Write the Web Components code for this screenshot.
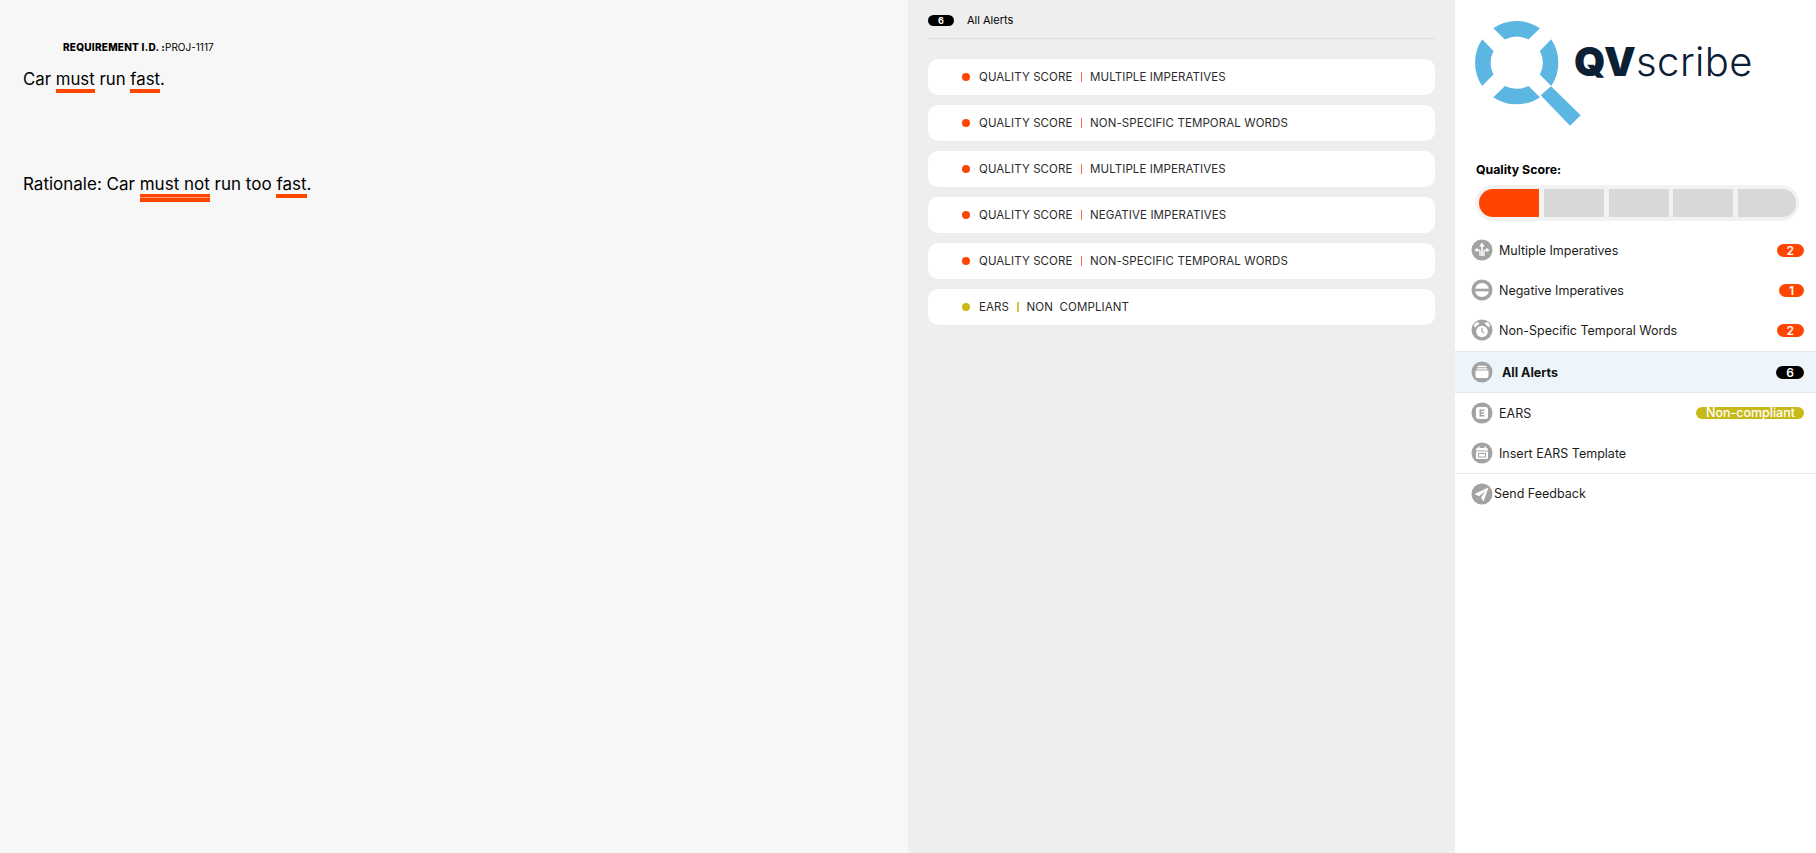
<!DOCTYPE html>
<html>
<head>
<meta charset="utf-8">
<title>QVscribe</title>
<style>
  html, body { margin: 0; height: 100%; }
  body { font-family: "Inter", "Liberation Sans", sans-serif; color: #000; overflow: hidden; }
</style>
</head>
<body>
<qv-app>
  <qv-document slot="document">
    <span slot="label">REQUIREMENT I.D. :</span>
    <span slot="id">PROJ-1117</span>
    <span slot="text">Car <qv-mark>must</qv-mark> run <qv-mark>fast</qv-mark>.</span>
    <span slot="rationale">Rationale: Car <qv-mark double>must not</qv-mark> run too <qv-mark>fast</qv-mark>.</span>
  </qv-document>
  <qv-alerts slot="alerts" count="6" title="All Alerts">
    <qv-alert kind="QUALITY SCORE" name="MULTIPLE IMPERATIVES"></qv-alert>
    <qv-alert kind="QUALITY SCORE" name="NON-SPECIFIC TEMPORAL WORDS"></qv-alert>
    <qv-alert kind="QUALITY SCORE" name="MULTIPLE IMPERATIVES"></qv-alert>
    <qv-alert kind="QUALITY SCORE" name="NEGATIVE IMPERATIVES"></qv-alert>
    <qv-alert kind="QUALITY SCORE" name="NON-SPECIFIC TEMPORAL WORDS"></qv-alert>
    <qv-alert kind="EARS" name="NON&nbsp; COMPLIANT" color="#c8b91a"></qv-alert>
  </qv-alerts>
  <qv-sidebar slot="sidebar">
    <qv-logo></qv-logo>
    <qv-score value="1"></qv-score>
    <qv-row icon="multi" badge="2">Multiple Imperatives</qv-row>
    <qv-row icon="negative" badge="1">Negative Imperatives</qv-row>
    <qv-row icon="clock" badge="2">Non-Specific Temporal Words</qv-row>
    <qv-row icon="tray" badge="6" badge-color="#000" active>All Alerts</qv-row>
    <qv-row icon="ears" badge="Non-compliant" badge-color="#c8b91a">EARS</qv-row>
    <qv-row icon="calendar">Insert EARS Template</qv-row>
    <qv-row icon="send" feedback>Send Feedback</qv-row>
  </qv-sidebar>
</qv-app>

<script>
// qv-app: the three columns
class QvApp extends HTMLElement {
  constructor() {
    super();
    this.attachShadow({ mode: 'open' }).innerHTML = `
      <style>
        :host { display: grid; grid-template-columns: 908px 547px 361px; height: 853px; }
      </style>
      <slot name="document"></slot>
      <slot name="alerts"></slot>
      <slot name="sidebar"></slot>`;
  }
}

// qv-document: the requirement text on the left
class QvDocument extends HTMLElement {
  constructor() {
    super();
    this.attachShadow({ mode: 'open' }).innerHTML = `
      <style>
        :host { display: block; background: #f7f7f7; padding: 41px 0 0 23px; }
        .req { font-size: 10px; line-height: 13px; padding-left: 40px; white-space: nowrap; }
        ::slotted([slot=label]) { font-weight: 800; letter-spacing: .25px; }
        .line { font-size: 16.800px; line-height: 24px; white-space: nowrap; }
        .text { margin-top: 13px; }
        .rationale { margin-top: 79px; font-size: 17px; }
      </style>
      <div class="req"><slot name="label"></slot><slot name="id"></slot></div>
      <div class="line text"><slot name="text"></slot></div>
      <div class="line rationale"><slot name="rationale"></slot></div>`;
  }
}

// qv-mark: an underlined hit in the text
class QvMark extends HTMLElement {
  constructor() {
    super();
    this.attachShadow({ mode: 'open' }).innerHTML = `
      <style>
        :host { display: inline-block; border-bottom: 4px solid #ff4500; line-height: 19px; height: 19px; }
        :host([double]) { border-bottom: 0; padding-bottom: 8px;
          background: linear-gradient(#ff4500 0 3.500px, #ff9a73 3.500px 4.500px, #ff4500 4.500px) bottom / 100% 8px no-repeat; }
      </style>
      <slot></slot>`;
  }
}

// qv-alerts: middle column with header and cards
class QvAlerts extends HTMLElement {
  constructor() {
    super();
    this.attachShadow({ mode: 'open' }).innerHTML = `
      <style>
        :host { display: block; background: #eeeeee; padding: 0 20px; }
        header { display: flex; align-items: center; gap: 13px; height: 38px; padding-top: 2px; box-sizing: border-box; font-size: 11px; }
        .count { width: 26px; height: 11px; border-radius: 6px; background: #000; color: #fff; font-size: 9px; font-weight: 700;
                 line-height: 11px; text-align: center; }
        hr { margin: 0 0 20px; border: 0; height: 1px; background: #dcdcdc; }
        .list { display: flex; flex-direction: column; gap: 10px; }
      </style>
      <header><span class="count"></span><span class="title"></span></header>
      <hr>
      <div class="list"><slot></slot></div>`;
  }
  connectedCallback() {
    this.shadowRoot.querySelector('.count').textContent = this.getAttribute('count');
    this.shadowRoot.querySelector('.title').textContent = this.getAttribute('title');
  }
}

// qv-alert: one white card
class QvAlert extends HTMLElement {
  constructor() {
    super();
    this.attachShadow({ mode: 'open' }).innerHTML = `
      <style>
        :host { display: flex; align-items: center; height: 36px; background: #fff; border-radius: 10px;
                padding-left: 34px; font-size: 11.500px; letter-spacing: .1px; color: #2b2b2b; white-space: nowrap; }
        .dot { width: 8px; height: 8px; border-radius: 50%; background: var(--c); margin-right: 9px; }
        .sep { width: 1.500px; height: 10px; background: var(--c); margin: 0 8px; opacity: .8; }
      </style>
      <span class="dot"></span><span class="kind"></span><span class="sep"></span><span class="name"></span>`;
  }
  connectedCallback() {
    this.style.setProperty('--c', this.getAttribute('color') || '#ff4500');
    this.shadowRoot.querySelector('.kind').textContent = this.getAttribute('kind');
    this.shadowRoot.querySelector('.name').textContent = this.getAttribute('name');
  }
}

// qv-sidebar: right column
class QvSidebar extends HTMLElement {
  constructor() {
    super();
    this.attachShadow({ mode: 'open' }).innerHTML = `
      <style>
        :host { display: block; background: #fff; }
      </style>
      <slot></slot>`;
  }
}

// qv-logo: magnifier and wordmark
class QvLogo extends HTMLElement {
  constructor() {
    super();
    this.attachShadow({ mode: 'open' }).innerHTML = `
      <style>
        :host { display: flex; align-items: flex-start; height: 160px; padding-left: 20px; box-sizing: border-box; }
        svg { margin-top: 21px; flex: none; }
        .word { margin: 40px 0 0 -7px; font-size: 40px; line-height: 44px; color: #0b2035; white-space: nowrap; }
        b { font-weight: 900; letter-spacing: .3px; }
        span { font-weight: 300; letter-spacing: .4px; }
      </style>
      <svg width="106" height="106" viewBox="0 0 106 106">
        <g fill="#5cb6e2">
          <path d="M18.300 7.200 A41.700 41.700 0 0 1 65 7.200 L53.400 18.500 A26 26 0 0 0 30 18.500 Z"/>
          <path d="M76.200 18.300 A41.700 41.700 0 0 1 76.200 65 L64.900 53.400 A26 26 0 0 0 64.900 30 Z"/>
          <path d="M7.200 18.300 A41.700 41.700 0 0 0 7.200 65 L18.500 53.400 A26 26 0 0 1 18.500 30 Z"/>
          <path d="M18.300 76.200 A41.700 41.700 0 0 0 65 76.200 L53.400 64.900 A26 26 0 0 1 30 64.900 Z"/>
          <path d="M65.700 74.300 L76 65.300 L105.700 94.300 L95 104.700 Z"/>
        </g>
      </svg>
      <div class="word"><b>QV</b><span>scribe</span></div>`;
  }
}

// qv-score: quality score meter
class QvScore extends HTMLElement {
  constructor() {
    super();
    this.attachShadow({ mode: 'open' }).innerHTML = `
      <style>
        :host { display: block; padding: 3px 17px 9px 20px; }
        .label { font-size: 12.300px; font-weight: 700; line-height: 13px; padding-left: 1px; }
        .bar { display: grid; grid-template-columns: 60px 60px 60px 60px 1fr; gap: 4.800px; margin-top: 9px; padding: 4px 3px 4px 4px;
               background: #f2f2f2; border-radius: 18px; height: 28px; }
        i { background: #d8d8d8; }
        i:first-child { border-radius: 14px 0 0 14px; }
        i:last-child { border-radius: 0 14px 14px 0; }
        i.on { background: #ff4500; }
      </style>
      <div class="label">Quality Score:</div>
      <div class="bar"><i></i><i></i><i></i><i></i><i></i></div>`;
  }
  connectedCallback() {
    const n = Number(this.getAttribute('value'));
    this.shadowRoot.querySelectorAll('i').forEach((el, idx) => {
      if (idx < n) el.classList.add('on');
    });
  }
}

const ICONS = {
  multi: '<g fill="none" stroke="#fff" stroke-width="1.600"><path d="M11 7 V17"/><path d="M5.500 11 H7.500 Q9 11 9 13 V17" stroke-width="1.300"/><path d="M16.500 11 H14.500 Q13 11 13 13 V17" stroke-width="1.300"/></g><path d="M11 3.500 L13.800 7.500 H8.200 Z M3.500 11 L6.500 8.800 V13.200 Z M18.500 11 L15.500 8.800 V13.200 Z" fill="#fff"/>',
  negative: '<circle cx="11" cy="11" r="7" fill="#fff"/><rect x="3" y="9.700" width="16" height="2.600" fill="#a3a3a3"/>',
  clock: '<circle cx="11" cy="12.500" r="5.800" fill="#fff"/><path d="M11 9 V12.500 L13 14" stroke="#a3a3a3" stroke-width="1.200" fill="none"/><path d="M4 8.500 A3 3 0 0 1 8.500 4.500 Z M18 8.500 A3 3 0 0 0 13.500 4.500 Z" fill="#fff"/>',
  tray: '<path d="M7.500 4.800 H14.500 A1 1 0 0 1 15.500 5.800 V6.300 H6.500 V5.800 A1 1 0 0 1 7.500 4.800 Z M5.800 7.200 H16.200 V8.600 H5.800 Z" fill="#fff"/><path d="M4.500 9.500 H17.500 V15 A2 2 0 0 1 15.500 17 H6.500 A2 2 0 0 1 4.500 15 Z" fill="#fff"/>',
  ears: '<rect x="5" y="5" width="12" height="12" rx="2.500" fill="#fff"/><path d="M8.500 7.500 H13.500 V9 H10.200 V10.300 H13 V11.700 H10.200 V13 H13.500 V14.500 H8.500 Z" fill="#a3a3a3"/>',
  calendar: '<rect x="5" y="6" width="12" height="11" rx="1.500" fill="#fff"/><rect x="7" y="4.500" width="1.500" height="3" fill="#fff"/><rect x="13.500" y="4.500" width="1.500" height="3" fill="#fff"/><rect x="5" y="8.500" width="12" height="1" fill="#a3a3a3"/><rect x="7.500" y="11.500" width="7" height="3.500" fill="none" stroke="#a3a3a3"/>',
  send: '<path d="M17.500 4.500 L3.500 11 L8 13.300 L14.500 8 L10 14.500 L12.500 18.500 Z" fill="#fff"/>'
};

// qv-row: one sidebar line with icon, label and optional badge
class QvRow extends HTMLElement {
  constructor() {
    super();
    this.attachShadow({ mode: 'open' }).innerHTML = `
      <style>
        :host { display: flex; align-items: center; height: 40px; padding: 0 12px 0 16px; font-size: 12.500px; color: #1c1c1c;
                white-space: nowrap; box-sizing: border-box; }
        :host([active]) { height: 42px; margin-top: 1px; font-weight: 700; background: #edf5fb; color: #111;
                border-top: 1px solid #e6e6e6; border-bottom: 1px solid #e6e6e6; }
        :host([feedback]) { border-top: 1px solid #e6e6e6; }
        svg { flex: none; margin-right: 6px; }
        :host([active]) svg { margin-right: 9px; }
        :host([feedback]) svg { margin-right: 1px; }
        .label { flex: 1; }
        .badge { height: 13px; padding: 0 10px; border-radius: 7px; color: #fff; font-size: 12px; font-weight: 600; line-height: 13px; }
        .badge.long { height: 12px; line-height: 12px; font-size: 12.500px; font-weight: 500; padding: 0 9px 0 10px; }
      </style>
      <svg width="22" height="22" viewBox="0 0 22 22"><circle cx="11" cy="11" r="10.500" fill="#a3a3a3"/><g class="glyph"></g></svg>
      <span class="label"><slot></slot></span>
      <span class="badge"></span>`;
  }
  connectedCallback() {
    const root = this.shadowRoot;
    root.querySelector('.glyph').innerHTML = ICONS[this.getAttribute('icon')];
    const badge = root.querySelector('.badge');
    const text = this.getAttribute('badge');
    if (!text) {
      badge.remove();
      return;
    }
    badge.textContent = text;
    badge.style.background = this.getAttribute('badge-color') || '#ff4500';
    if (text.length > 2) badge.classList.add('long');
  }
}

customElements.define('qv-app', QvApp);
customElements.define('qv-document', QvDocument);
customElements.define('qv-mark', QvMark);
customElements.define('qv-alerts', QvAlerts);
customElements.define('qv-alert', QvAlert);
customElements.define('qv-sidebar', QvSidebar);
customElements.define('qv-logo', QvLogo);
customElements.define('qv-score', QvScore);
customElements.define('qv-row', QvRow);
</script>
</body>
</html>
